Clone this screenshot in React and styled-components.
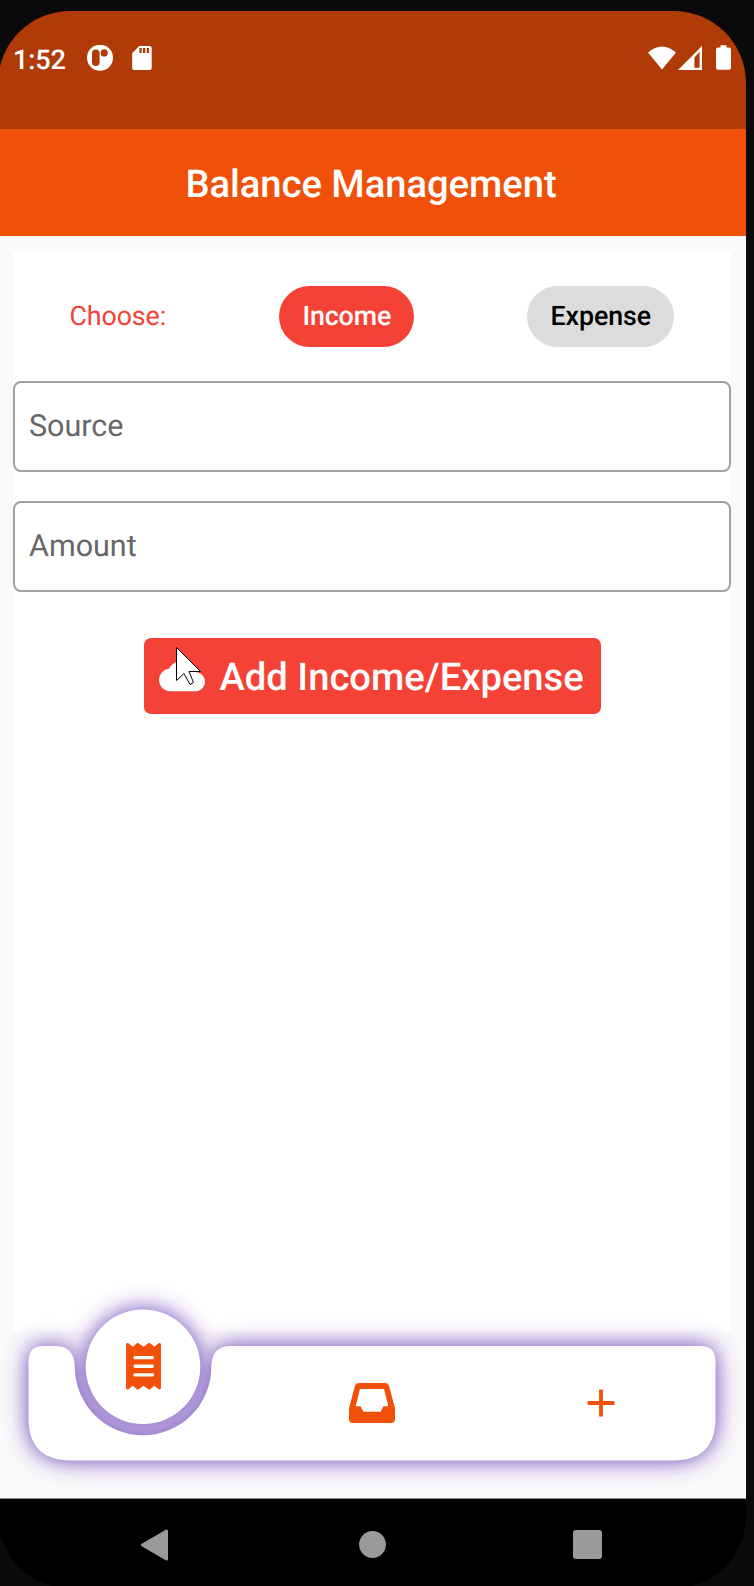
import React from 'react';
import styled, { createGlobalStyle } from 'styled-components';
import { MdCloud, MdAdd } from 'react-icons/md';

const GlobalStyle = createGlobalStyle`
  * { box-sizing: border-box; }
  html, body { margin: 0; padding: 0; background: #0a0a0b; }
  body {
    font-family: Roboto, sans-serif;
    overflow: hidden;
    text-rendering: geometricPrecision;
  }
  button, input { text-rendering: inherit; }
`;

const Stage = styled.div`
  width: 754px;
  height: 1586px;
  padding-top: 11px;
  overflow: hidden;
  background: #0a0a0b;
`;

const Phone = styled.div`
  width: 748px;
  height: 1577px;
  margin-left: -2px;
  border-radius: 72px;
  overflow: hidden;
  display: flex;
  flex-direction: column;
  background: #000;
`;

const StatusBar = styled.header`
  flex: none;
  height: 118px;
  padding: 31px 15px 0 15px;
  display: flex;
  justify-content: space-between;
  align-items: flex-start;
  background: #b03b06;
  color: #fff;
`;

const StatusGroup = styled.div`
  height: 34px;
  display: flex;
  align-items: center;
`;

const Clock = styled.span`
  width: 74px;
  font-size: 27.2px;
  font-weight: 500;
  letter-spacing: -0.2px;
  line-height: 34px;
  padding-top: 1px;
`;

const StatusIcon = styled.svg`
  display: block;
  width: ${(p) => p.$w}px;
  height: 28px;
  margin-left: ${(p) => p.$gap || 0}px;
  fill: currentColor;
`;

const AppBar = styled.div`
  flex: none;
  height: 107px;
  display: flex;
  align-items: center;
  justify-content: center;
  background: #f05008;
`;

const Title = styled.h1`
  margin: 4px 2px 0 0;
  color: #fff;
  font-size: 38.2px;
  font-weight: 500;
  letter-spacing: -0.03px;
`;

const Body = styled.main`
  flex: none;
  height: 1263px;
  padding: 15px 15px 0;
  display: flex;
  flex-direction: column;
  background: #fafafa;
  border-bottom: 1px solid #8c8c8c;
`;

const Card = styled.section`
  flex: none;
  height: 1080px;
  padding-top: 34px;
  display: flex;
  flex-direction: column;
  align-items: center;
  background: #fff;
`;

const ChoiceRow = styled.div`
  width: 100%;
  height: 62px;
  padding: 0 57px 0 56.5px;
  margin-bottom: 34px;
  display: flex;
  align-items: center;
  justify-content: space-between;
`;

const ChoiceLabel = styled.span`
  color: #f44336;
  font-size: 26.8px;
  letter-spacing: -0.1px;
`;

const Chip = styled.button`
  width: ${(p) => p.$w}px;
  height: 61px;
  padding: 0;
  border: 0;
  border-radius: 31px;
  font: 500 26.8px Roboto, sans-serif;
  letter-spacing: -0.1px;
  color: ${(p) => (p.$selected ? '#fff' : '#000')};
  background: ${(p) => (p.$selected ? '#f44336' : '#dcdcdc')};
`;

const Field = styled.input`
  width: 718px;
  height: 91px;
  margin-bottom: 29px;
  padding: 0 14px;
  border: 2px solid #a0a0a0;
  border-radius: 8px;
  outline: 0;
  background: transparent;
  font: 400 30.5px Roboto, sans-serif;
  &::placeholder { color: #676767; opacity: 1; }
`;

const SubmitButton = styled.button`
  position: relative;
  width: 457px;
  height: 76px;
  margin-top: 17px;
  padding: 0 0 0 15px;
  display: flex;
  align-items: center;
  gap: 15px;
  border: 0;
  border-radius: 7px;
  background: #f44336;
  color: #fff;
  font: 500 38.2px Roboto, sans-serif;
  white-space: nowrap;
  svg { flex: none; }
`;

const SubmitLabel = styled.span`
  padding-top: 3px;
`;

const Pointer = styled.svg`
  position: absolute;
  left: 31.5px;
  top: 8px;
`;

const BottomBar = styled.nav`
  position: relative;
  width: 687px;
  height: 115px;
  margin: 15px 0 0 15.5px;
  display: flex;
  color: #f05008;
`;

const BarShape = styled.svg`
  position: absolute;
  left: -28.5px;
  top: -86px;
`;

const Tab = styled.button`
  position: relative;
  flex: 1;
  padding: 0;
  padding-bottom: ${(p) => (p.$raised ? 74 : 2)}px;
  display: flex;
  align-items: center;
  justify-content: center;
  border: 0;
  background: transparent;
  color: inherit;
`;

const SystemNav = styled.footer`
  flex: none;
  height: 89px;
  padding: 2px 144px 0 143px;
  display: flex;
  align-items: center;
  justify-content: space-between;
  background: #000;
`;

const BAR_PATH =
  'M28.5 101 Q28.5 86 43.5 86 H55 Q74.5 86 74.8 107 A68.25 68.25 0 0 0 211.3 107 Q211.3 86 231 86 H700.5 Q715.5 86 715.5 101 V158 Q715.5 200.5 673 200.5 H71 Q28.5 200.5 28.5 158 Z';

function StatusIcons() {
  return (
    <StatusGroup>
      <StatusIcon $w={28} viewBox="0 0 28 28">
        <path d="M0 7.5 Q14 -4.5 28 7.5 L14 24.5 Z" />
      </StatusIcon>
      <StatusIcon $w={24} $gap={2} viewBox="0 0 24 28">
        <path fillRule="evenodd" d="M0 25 L24 1 V25 Z M16.4 12.5 V22.7 H21.6 V6.8 Z" />
      </StatusIcon>
      <StatusIcon $w={15} $gap={14} viewBox="0 0 15 28">
        <path d="M4.5 0.3 H10.5 V2.5 H13 Q15 2.5 15 4.5 V22.8 Q15 24.8 13 24.8 H2 Q0 24.8 0 22.8 V4.5 Q0 2.5 2 2.5 H4.5 Z" />
      </StatusIcon>
    </StatusGroup>
  );
}

function ReceiptIcon() {
  return (
    <svg width="35" height="46.5" viewBox="0 0 384 512">
      <path
        fill="currentColor"
        d="M358.4 3.2L310 42 265.6 3.2a15.9 15.9 0 0 0-19.2 0L192 42 137.6 3.2a15.9 15.9 0 0 0-19.2 0L74 42 25.6 3.2C15-4.7 0 2.8 0 16v480c0 13.2 15 20.7 25.6 12.8L74 470l44.4 38.8a15.9 15.9 0 0 0 19.2 0L192 470l54.4 38.8a15.9 15.9 0 0 0 19.2 0L310 470l48.4 38.8c10.5 7.9 25.6.4 25.6-12.8V16c0-13.2-15-20.7-25.6-12.8z"
      />
      <g fill="#fff">
        <rect x="82" y="142" width="224" height="36" rx="14" />
        <rect x="82" y="238" width="224" height="36" rx="14" />
        <rect x="82" y="334" width="224" height="36" rx="14" />
      </g>
    </svg>
  );
}

function InboxIcon() {
  return (
    <svg width="46" height="40" viewBox="0 0 138 120" fill="currentColor">
      <path
        fillRule="evenodd"
        d="M28 0 H110 Q118 0 120 8 L137 72 Q138 76 138 80 V108 Q138 120 126 120 H12 Q0 120 0 108 V80 Q0 76 1 72 L18 8 Q20 0 28 0 Z M33 18 L20 70 H35 L43 86 H95 L103 70 H118 L105 18 Z"
      />
    </svg>
  );
}

export default function App() {
  return (
    <Stage>
      <GlobalStyle />
      <Phone>
        <StatusBar>
          <StatusGroup>
            <Clock>1:52</Clock>
            <StatusIcon $w={26} viewBox="0 0 26 28">
              <circle cx="13" cy="12.7" r="13" />
              <rect x="5" y="4.5" width="7.6" height="16.6" rx="3.8" fill="#b03b06" />
              <circle cx="17.2" cy="7.9" r="3.6" fill="#b03b06" />
            </StatusIcon>
            <StatusIcon $w={20} $gap={19} viewBox="0 0 20 28">
              <path d="M7.4 1 H17.5 Q19.7 1 19.7 3.2 V22.7 Q19.7 24.9 17.5 24.9 H2.3 Q0.2 24.9 0.2 22.7 V7.9 Z" />
              <path d="M7.4 3h2.3v5H7.4z M11 3h2.3v5H11z M14.7 3H17v5h-2.3z" fill="#b03b06" />
            </StatusIcon>
          </StatusGroup>
          <StatusIcons />
        </StatusBar>
        <AppBar>
          <Title>Balance Management</Title>
        </AppBar>
        <Body>
          <Card>
            <ChoiceRow>
              <ChoiceLabel>Choose:</ChoiceLabel>
              <Chip $w={135} $selected>Income</Chip>
              <Chip $w={146.5}>Expense</Chip>
            </ChoiceRow>
            <Field placeholder="Source" />
            <Field placeholder="Amount" />
            <SubmitButton>
              <MdCloud size={46} />
              <SubmitLabel>Add Income/Expense</SubmitLabel>
              <Pointer width="28" height="42" viewBox="0 0 28 42">
                <path
                  d="M1.5 1.5 V34.5 L9 27.5 L15 38.5 L18.5 36.5 L14 25.5 H25.5 Z"
                  fill="#fff"
                  stroke="#000"
                />
              </Pointer>
            </SubmitButton>
          </Card>
          <BottomBar>
            <BarShape width="746" height="238" viewBox="0 0 746 238">
              <defs>
                <filter id="glow" filterUnits="userSpaceOnUse" x="-40" y="0" width="830" height="260">
                  <feGaussianBlur stdDeviation="11.5" />
                </filter>
              </defs>
              <path d={BAR_PATH} fill="#673ab7" filter="url(#glow)" />
              <circle cx="143" cy="106.8" r="57.3" fill="#673ab7" filter="url(#glow)" />
              <path d={BAR_PATH} fill="#fff" />
              <circle cx="143" cy="106.8" r="57.3" fill="#fff" />
            </BarShape>
            <Tab $raised><ReceiptIcon /></Tab>
            <Tab><InboxIcon /></Tab>
            <Tab><MdAdd size={46} /></Tab>
          </BottomBar>
        </Body>
        <SystemNav>
          <svg width="31" height="32" viewBox="0 0 31 32">
            <path d="M25.5 2 V30 L1.5 16 Z" fill="#9a9a9a" stroke="#9a9a9a" strokeWidth="3" strokeLinejoin="round" />
          </svg>
          <svg width="27" height="27" viewBox="0 0 27 27"><circle cx="13.5" cy="13.5" r="13.4" fill="#9a9a9a" /></svg>
          <svg width="29" height="29" viewBox="0 0 29 29"><rect width="29" height="29" rx="3" fill="#9a9a9a" /></svg>
        </SystemNav>
      </Phone>
    </Stage>
  );
}
